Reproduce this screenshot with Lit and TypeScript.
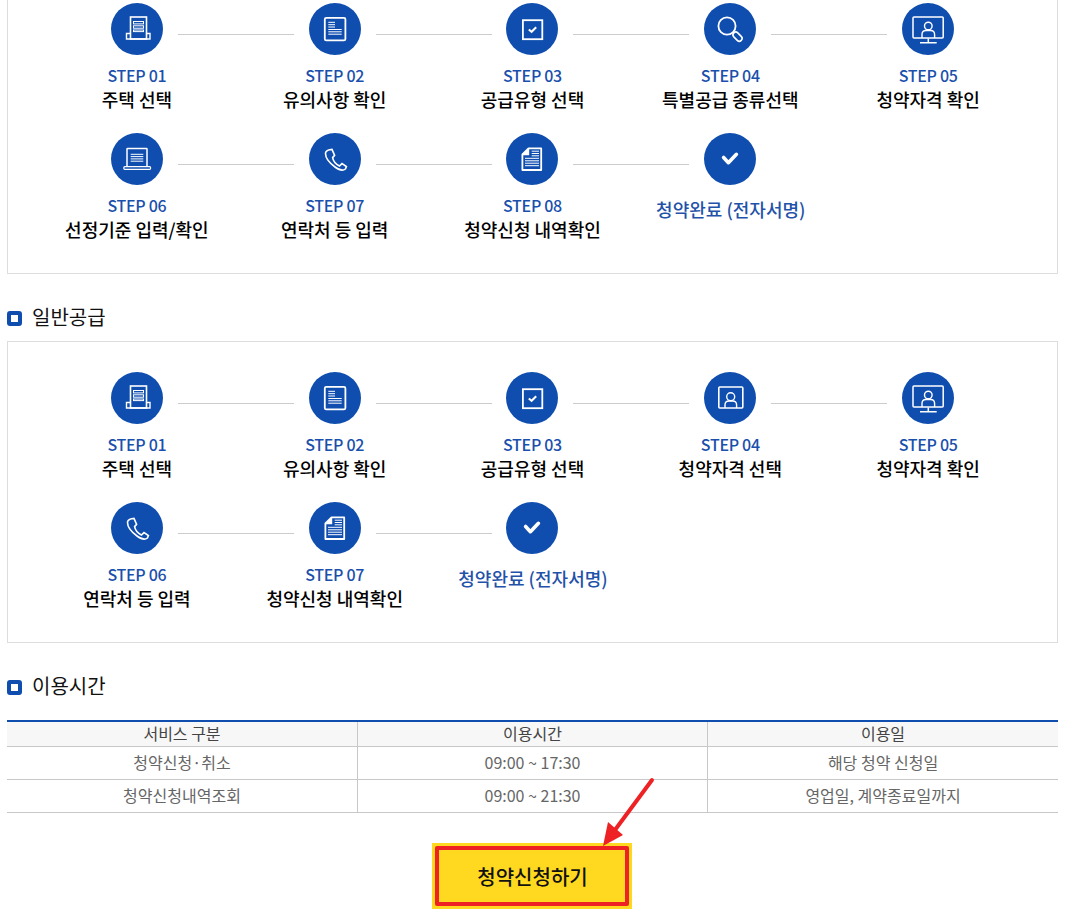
import { LitElement, html, css, svg } from "lit";
import { customElement } from "lit/decorators.js";

const L = (x1: number, x2: number, ys: number[]) => ys.map((y) => svg`<line x1=${x1} x2=${x2} y1=${y} y2=${y} stroke-width="1"></line>`);

const person = svg`<circle cx="26.3" cy="23" r="3.8"></circle><path d="M20 35v-3.5q0-4 4-4h4.6q4 0 4 4V35"></path>`;

const icons: Record<string, unknown> = {
  house: svg`<rect x="19.5" y="14" width="16" height="22" stroke-width="1.6"></rect><path d="M19.5 30.5H15.5V36H39V30.5H35.5"></path><rect x="22.5" y="18.5" width="10" height="2.4" stroke-width="1"></rect><rect x="22.5" y="22.8" width="10" height="2.4" stroke-width="1"></rect><rect x="22.5" y="27" width="10" height="1.6" stroke-width="1"></rect>`,
  doc: svg`<rect x="15.8" y="14.8" width="20.6" height="22.6" rx="1.5" stroke-width="1.8"></rect>${L(19.3, 26, [19.3, 21.7, 24])}${L(19.3, 32.7, [26.5, 28.8, 31.2])}`,
  check: svg`<rect x="16.9" y="17.2" width="19.4" height="19" stroke-width="1.8"></rect><path d="M22.8 26.4l2.8 2.4 4.6-4.6" stroke-width="2"></path>`,
  search: svg`<circle cx="23" cy="23" r="8.6" stroke-width="1.8"></circle><rect x="-2.6" y="-5" width="5.6" height="10.5" rx="2.8" transform="translate(33.2 33.6) rotate(-45)" stroke-width="1.6"></rect>`,
  monitor: svg`<rect x="11" y="14" width="30.2" height="21" rx="1" stroke-width="1.5"></rect><path d="M26.3 35.5v4M18 39.7h16.7" stroke-width="1.5"></path>${person}`,
  laptop: svg`<path d="M16 33.7V16a.6.6 0 0 1 .6-.6H35.4a.6.6 0 0 1 .6.6V33.7" stroke-width="1.5"></path><rect x="12.8" y="33.7" width="26.8" height="2.6" rx="1" stroke-width="1.2"></rect>${L(19.7, 32.3, [21.3, 23.6, 25.9, 28.2])}`,
  phone: svg`<path d="M20.5 16.8L23 16.4L25.6 22.4L23.6 24.6C24.2 28 27 31.2 30.4 33L33 30.6L37.4 33.6L36.4 36C34 38 30 37 26 34C21 30.4 16.5 25 16.5 20.6C16.5 18.6 18.5 17.4 20.5 16.8Z" stroke-width="1.6"></path>`,
  file: svg`<path d="M22.5 15.4H35.2V37H16.4V21.5Z" stroke-width="1.8" stroke-linejoin="round"></path><path d="M22.5 15.4V21.5H16.4" fill="#fff" stroke-width="1.4"></path>${L(25.7, 33, [18.2, 20.5, 22.8])}${L(19, 33, [25.3, 27.8, 30.2, 32.7])}`,
  done: svg`<path d="M19.6 24.5l4.8 5.2 8-8.4" stroke-width="3.6" stroke-linecap="round" stroke-linejoin="round"></path>`,
  portrait: svg`<rect x="14.8" y="15" width="24" height="21" rx="1" stroke-width="1.6"></rect><circle cx="26.7" cy="24.8" r="4"></circle><path d="M21 36v-3q0-4 4-4h3.6q4 0 4 4v3"></path>`,
};

type Step = { icon: string; step?: string; label: string };

const special: Step[] = [
  { icon: "house", step: "STEP 01", label: "주택 선택" },
  { icon: "doc", step: "STEP 02", label: "유의사항 확인" },
  { icon: "check", step: "STEP 03", label: "공급유형 선택" },
  { icon: "search", step: "STEP 04", label: "특별공급 종류선택" },
  { icon: "monitor", step: "STEP 05", label: "청약자격 확인" },
  { icon: "laptop", step: "STEP 06", label: "선정기준 입력/확인" },
  { icon: "phone", step: "STEP 07", label: "연락처 등 입력" },
  { icon: "file", step: "STEP 08", label: "청약신청 내역확인" },
  { icon: "done", label: "청약완료 (전자서명)" },
];

const general: Step[] = [
  { icon: "house", step: "STEP 01", label: "주택 선택" },
  { icon: "doc", step: "STEP 02", label: "유의사항 확인" },
  { icon: "check", step: "STEP 03", label: "공급유형 선택" },
  { icon: "portrait", step: "STEP 04", label: "청약자격 선택" },
  { icon: "monitor", step: "STEP 05", label: "청약자격 확인" },
  { icon: "phone", step: "STEP 06", label: "연락처 등 입력" },
  { icon: "file", step: "STEP 07", label: "청약신청 내역확인" },
  { icon: "done", label: "청약완료 (전자서명)" },
];

@customElement("app-root")
export class AppRoot extends LitElement {
  static styles = css`
    :host {
      display: block;
      width: 1066px;
      height: 910px;
      overflow: hidden;
      background: #fff;
      font-family: "Noto Sans CJK KR", "Noto Sans", sans-serif;
      color: #111;
    }
    .page { padding: 0 8px 0 7px; }
    .box {
      border: 1px solid #ddd;
      padding: 30px 30px 10px 30px;
      display: grid;
      grid-template-columns: repeat(5, minmax(0, 1fr));
      grid-auto-rows: 130px;
    }
    .box.first { margin-top: -28px; }
    .cell { display: flex; flex-direction: column; align-items: center; min-width: 0; }
    .head { display: flex; align-self: stretch; padding-left: calc((100% - 52px) / 2); height: 52px; }
    .circle { width: 52px; height: 52px; flex: none; display: block; }
    .circle circle.bg { fill: #0f4eaf; stroke: none; }
    .circle .ico { fill: none; stroke: #fff; stroke-width: 1.4; }
    .link { flex: none; width: 116px; height: 1px; margin: 31px -58px 0 15px; background: #ccc; }
    .no { margin-top: 9px; font-size: 16px; line-height: 22px; font-weight: 500; color: #1a50ac; letter-spacing: -0.3px; }
    .label { font-size: 18px; line-height: 26px; font-weight: 500; color: #000; white-space: nowrap; }
    .last { margin-top: 11px; padding-left: 1px; font-size: 18px; line-height: 26px; font-weight: 500; color: #1f52a8; white-space: nowrap; }
    .title { box-sizing: border-box; display: flex; align-items: center; gap: 10px; height: 26px; padding-bottom: 1px; font-size: 20px; font-weight: 400; color: #111; }
    .title::before { content: ""; box-sizing: border-box; width: 15px; height: 15px; border: 4px solid #0f4eaf; border-radius: 3px; margin-top: 4px; }
    .t1 { margin: 30px 0 11px; }
    .t2 { margin: 30px 0 21px; }
    table { width: 100%; table-layout: fixed; border-collapse: separate; border-spacing: 0; border-top: 2px solid #0f4eaf; font-size: 16px; color: #666; }
    col.c { width: 350px; }
    th, td { padding: 0 0 2px; text-align: center; border-bottom: 1px solid #c8c8c8; border-left: 1px solid #c8c8c8; font-weight: 400; line-height: 20px; }
    th:first-child, td:first-child { border-left: none; }
    th { height: 22px; background: #f7f7f7; color: #444; }
    td { height: 30px; }
    .cta { position: relative; display: flex; justify-content: center; margin-top: 30px; padding-right: 2px; }
    .btn { box-sizing: border-box; width: 200px; height: 66px; border: 3px solid #ffd91f; background: #ffd91f; padding: 0; display: flex; }
    .btn span { flex: 1; box-sizing: border-box; border: 4px solid #ee2224; border-radius: 2px; padding-left: 2px; background: #ffd91f; font-size: 20px; font-weight: 500; color: #111; display: flex; align-items: center; justify-content: center; }
    .arrow { position: absolute; left: 583px; top: -71px; width: 70px; height: 75px; }
  `;

  private renderSteps(items: Step[], first = false) {
    return html`<div class="box ${first ? "first" : ""}">
      ${items.map((s, i) => {
        const linked = i < items.length - 1 && (i + 1) % 5 !== 0;
        return html`<div class="cell">
          <div class="head">
            <svg class="circle" viewBox="0 0 52 52">
              <circle class="bg" cx="26" cy="26" r="26"></circle>
              <g class="ico">${icons[s.icon]}</g>
            </svg>
            ${linked ? html`<div class="link"></div>` : ""}
          </div>
          ${s.step
            ? html`<div class="no">${s.step}</div><div class="label">${s.label}</div>`
            : html`<div class="last">${s.label}</div>`}
        </div>`;
      })}
    </div>`;
  }

  render() {
    return html`<div class="page">
      ${this.renderSteps(special, true)}
      <div class="title t1">일반공급</div>
      ${this.renderSteps(general)}
      <div class="title t2">이용시간</div>
      <table>
        <colgroup><col class="c" /><col class="c" /><col /></colgroup>
        <thead><tr><th>서비스 구분</th><th>이용시간</th><th>이용일</th></tr></thead>
        <tbody>
          <tr><td>청약신청·취소</td><td>09:00 ~ 17:30</td><td>해당 청약 신청일</td></tr>
          <tr><td>청약신청내역조회</td><td>09:00 ~ 21:30</td><td>영업일, 계약종료일까지</td></tr>
        </tbody>
      </table>
      <div class="cta">
        <div class="btn"><span>청약신청하기</span></div>
        <svg class="arrow" viewBox="0 0 70 75">
          <path d="M62 8L22 62" stroke="#ee2224" stroke-width="4" stroke-linecap="round" fill="none"></path>
          <path d="M13 74L18 50L33 63Z" fill="#ee2224"></path>
        </svg>
      </div>
    </div>`;
  }
}
